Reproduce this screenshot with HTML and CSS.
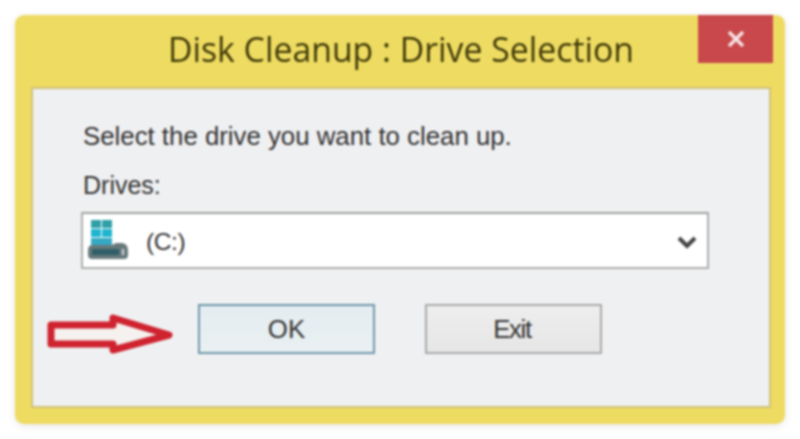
FILE: index.html
```html
<!DOCTYPE html>
<html lang="en">
<head>
    <meta charset="UTF-8">
    <meta name="viewport" content="width=device-width, initial-scale=1.0">
    <link rel="stylesheet" href="styles.css">
    <title>Disk Cleanup : Drive Selection</title>
</head>
<body>

    <div class="window">
        <header class="titlebar">
            <h1 class="title">Disk Cleanup : Drive Selection</h1>
            <button class="close" aria-label="Close">
                <svg width="20" height="18" viewBox="0 0 20 18">
                    <path d="M3 2 L17 16 M17 2 L3 16" stroke="#f6e3e3" stroke-width="3.4" fill="none"/>
                </svg>
            </button>
        </header>

        <main class="client">
            <p class="prompt">Select the drive you want to clean up.</p>
            <p class="label">Drives:</p>

            <div class="combo">
                <svg class="drive-icon" width="42" height="42" viewBox="0 0 42 42">
                    <rect x="3" y="0" width="10" height="8" fill="#2f9fa8"/>
                    <rect x="14" y="0" width="10" height="8" fill="#2f9fa8"/>
                    <rect x="3" y="9" width="10" height="8" fill="#1fb4cf"/>
                    <rect x="14" y="9" width="10" height="8" fill="#1fb4cf"/>
                    <rect x="3" y="18" width="21" height="7" fill="#35a9c4"/>
                    <path d="M0 30 Q0 25 5 25 H24 L28 23 H34 Q40 24 40 30 V35 Q40 39 36 39 H4 Q0 39 0 35 Z" fill="#68797c"/>
                    <rect x="4" y="29" width="27" height="6" fill="#2f5f68"/>
                    <rect x="34" y="29" width="2" height="6" fill="#cfd8d8"/>
                </svg>
                <span class="drive-name">(C:)</span>
                <svg class="chevron" width="20" height="14" viewBox="0 0 20 14">
                    <path d="M2 3 L10 11 L18 3" stroke="#444" stroke-width="4" fill="none"/>
                </svg>
            </div>

            <div class="actions">
                <button class="btn btn-default">OK</button>
                <button class="btn btn-exit">Exit</button>
            </div>

            <svg class="arrow" width="128" height="46" viewBox="0 0 128 46">
                <path d="M4 12 H66 V5 L122 22 L66 37 V31 H4 Z" fill="#f4f1ee" stroke="#cf2330" stroke-width="7" stroke-linejoin="round"/>
            </svg>
        </main>
    </div>

</body>
</html>
```

FILE: styles.css
```css
html, body {
    margin: 0;
    height: 100%;
}

body {
    background-color: #fff;
    font-family: 'Open Sans', sans-serif;
    padding: 15px;
    box-sizing: border-box;
}

.window {
    width: 770px;
    height: 409px;
    box-sizing: border-box;
    padding: 0 14px 16px 16px;
    display: flex;
    flex-direction: column;
    background-color: #eedb62;
    border-radius: 9px;
    box-shadow: 0 2px 8px rgba(0, 0, 0, 0.1);
    filter: blur(0.8px);
}

.titlebar {
    position: relative;
    height: 72px;
    display: flex;
    align-items: center;
    justify-content: center;
}

.title {
    margin: 0 0 5px;
    font-size: 33.8px;
    font-weight: 400;
    color: #3f3a08;
    white-space: nowrap;
}

.close {
    position: absolute;
    top: 0;
    right: -2px;
    width: 75px;
    height: 48px;
    padding: 0;
    border: none;
    background-color: #c9484c;
    display: flex;
    align-items: center;
    justify-content: center;
}

.client {
    position: relative;
    flex: 1;
    padding: 31px 60px 0 50px;
    background-color: #eff0f1;
    border: 2px solid #cfc27a;
    color: #333;
    font-family: 'Liberation Sans', sans-serif;
}

.prompt,
.label {
    margin: 0;
    font-size: 25.8px;
    line-height: 32px;
}

.label {
    margin-top: 17px;
    font-size: 25px;
}

.combo {
    margin: 11px 0 0 -2px;
    height: 57px;
    box-sizing: border-box;
    display: flex;
    align-items: center;
    background-color: #fff;
    border: 2px solid #adadad;
    border-top-color: #a0a0a0;
    padding: 0 10px 0 5px;
}

.drive-name {
    margin: 3px 0 0 16px;
    font-size: 24.5px;
    letter-spacing: -0.4px;
}

.chevron {
    margin: 3px 0 0 auto;
}

.actions {
    margin: 35px 0 0 115px;
    display: flex;
    gap: 50px;
}

.btn {
    width: 177px;
    height: 50px;
    padding: 0;
    font-family: 'Liberation Sans', sans-serif;
    font-size: 25.8px;
    color: #333;
    background: linear-gradient(#eeeeee, #e6e6e6);
    border: 2px solid #a9a9a9;
}

.btn-default {
    background: linear-gradient(#e4edf1, #eaf0f2);
    border-color: #6f97ab;
}

.btn-exit {
    letter-spacing: -1.4px;
    padding-right: 3px;
}

.arrow {
    position: absolute;
    left: 14px;
    top: 224px;
}
```
